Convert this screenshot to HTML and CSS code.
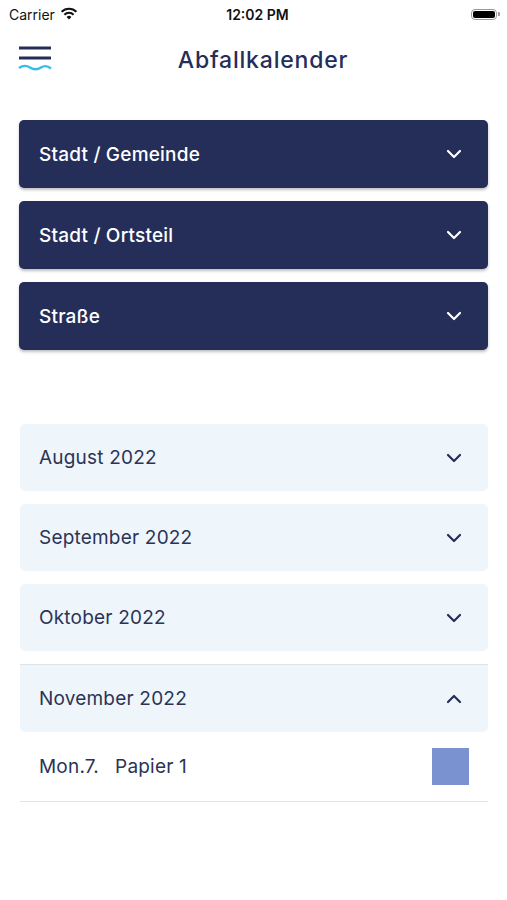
FILE: index.html
```html
<!DOCTYPE html>
<html lang="de">
<head>
    <meta charset="UTF-8">
    <meta name="viewport" content="width=device-width, initial-scale=1.0">
    <title>Abfallkalender</title>
    <link rel="stylesheet" href="styles.css">
</head>
<body>
    <div class="status-bar">
        <div class="carrier">
            Carrier
            <svg class="wifi" width="18" height="13" viewBox="0 0 18 13">
                <path d="M9 12.5 L6.6 9.9 A3.4 3.4 0 0 1 11.4 9.9 Z" fill="#111"/>
                <path d="M4.4 7.7 A6.5 6.5 0 0 1 13.6 7.7" stroke="#111" stroke-width="2.1" fill="none"/>
                <path d="M1.6 4.8 A10.5 10.5 0 0 1 16.4 4.8" stroke="#111" stroke-width="2.1" fill="none"/>
            </svg>
        </div>
        <div class="clock">12:02 PM</div>
        <div class="battery">
            <span class="battery-body"><span class="battery-fill"></span></span>
            <span class="battery-cap"></span>
        </div>
    </div>

    <header class="top-bar">
        <svg class="menu-icon" width="34" height="28" viewBox="0 0 34 28">
            <line x1="1" y1="4" x2="33" y2="4" stroke="#252d59" stroke-width="3"/>
            <line x1="1" y1="14" x2="33" y2="14" stroke="#252d59" stroke-width="3"/>
            <path d="M1 24 C5 21 8 21 12 23.5 C16 26 19 26 23 23.5 C27 21 30 22 33 24.5" stroke="#35bde8" stroke-width="2.4" fill="none"/>
        </svg>
        <h1>Abfallkalender</h1>
    </header>

    <div class="filters">
        <div class="select">
            <span>Stadt / Gemeinde</span>
            <svg class="chevron" width="16" height="10" viewBox="0 0 16 10"><path d="M2 2 L8 8 L14 2" stroke="#fff" stroke-width="2.2" fill="none" stroke-linecap="round" stroke-linejoin="round"/></svg>
        </div>
        <div class="select">
            <span>Stadt / Ortsteil</span>
            <svg class="chevron" width="16" height="10" viewBox="0 0 16 10"><path d="M2 2 L8 8 L14 2" stroke="#fff" stroke-width="2.2" fill="none" stroke-linecap="round" stroke-linejoin="round"/></svg>
        </div>
        <div class="select">
            <span>Straße</span>
            <svg class="chevron" width="16" height="10" viewBox="0 0 16 10"><path d="M2 2 L8 8 L14 2" stroke="#fff" stroke-width="2.2" fill="none" stroke-linecap="round" stroke-linejoin="round"/></svg>
        </div>
    </div>

    <div class="months">
        <div class="month">
            <span>August 2022</span>
            <svg class="chevron" width="16" height="10" viewBox="0 0 16 10"><path d="M2 2 L8 8 L14 2" stroke="#252d59" stroke-width="2.2" fill="none" stroke-linecap="round" stroke-linejoin="round"/></svg>
        </div>
        <div class="month">
            <span>September 2022</span>
            <svg class="chevron" width="16" height="10" viewBox="0 0 16 10"><path d="M2 2 L8 8 L14 2" stroke="#252d59" stroke-width="2.2" fill="none" stroke-linecap="round" stroke-linejoin="round"/></svg>
        </div>
        <div class="month">
            <span>Oktober 2022</span>
            <svg class="chevron" width="16" height="10" viewBox="0 0 16 10"><path d="M2 2 L8 8 L14 2" stroke="#252d59" stroke-width="2.2" fill="none" stroke-linecap="round" stroke-linejoin="round"/></svg>
        </div>
        <div class="month-group open">
            <div class="month">
                <span>November 2022</span>
                <svg class="chevron" width="16" height="10" viewBox="0 0 16 10"><path d="M2 8 L8 2 L14 8" stroke="#252d59" stroke-width="2.2" fill="none" stroke-linecap="round" stroke-linejoin="round"/></svg>
            </div>
            <div class="entry">
                <span class="entry-date">Mon.7.</span>
                <span class="entry-type">Papier 1</span>
                <span class="entry-color" style="background-color: #7b92d1;"></span>
            </div>
        </div>
    </div>
</body>
</html>
```

FILE: styles.css
```css
body {
    font-family: Inter, "Noto Sans", sans-serif;
    margin: 0;
    padding: 0;
    background-color: #fff;
    color: #2c3355;
}

.status-bar {
    height: 28px;
    display: grid;
    grid-template-columns: 1fr auto 1fr;
    align-items: center;
    padding: 0 7px 0 9px;
    font-size: 14px;
    color: #111;
}

.carrier {
    display: flex;
    align-items: center;
    gap: 5px;
    font-weight: 400;
}

.wifi {
    margin-top: -2px;
}

.clock {
    font-weight: 600;
    margin-left: 6px;
}

.battery {
    justify-self: end;
    display: flex;
    align-items: center;
}

.battery-body {
    width: 26px;
    height: 11px;
    border: 1px solid #9a9a9a;
    border-radius: 4px;
    padding: 1px;
    box-sizing: border-box;
    display: flex;
}

.battery-fill {
    flex: 1;
    background: #000;
    border-radius: 2px;
}

.battery-cap {
    width: 2px;
    height: 4px;
    background: #9a9a9a;
    border-radius: 0 1px 1px 0;
    margin-left: 1px;
}

.top-bar {
    height: 64px;
    position: relative;
    display: flex;
    align-items: center;
    justify-content: center;
}

.menu-icon {
    position: absolute;
    left: 18px;
    top: 16px;
}

h1 {
    margin: 0 0 0 19px;
    font-size: 23px;
    font-weight: 500;
    color: #252d59;
    letter-spacing: 0.8px;
}

.filters {
    padding: 28px 19px 0;
    display: flex;
    flex-direction: column;
    gap: 13px;
}

.select {
    height: 68px;
    background-color: #252d59;
    border-radius: 5px;
    box-shadow: 0 2px 3px rgba(0, 0, 0, 0.25);
    display: flex;
    align-items: center;
    justify-content: space-between;
    padding: 0 26px 0 20px;
    color: #fff;
    font-size: 19px;
    font-weight: 500;
    letter-spacing: 0.2px;
}

.months {
    margin: 74px 19px 0 20px;
    display: flex;
    flex-direction: column;
    gap: 13px;
}

.month {
    height: 67px;
    background-color: #eef6fc;
    border-radius: 5px;
    display: flex;
    align-items: center;
    justify-content: space-between;
    padding: 0 26px 0 19px;
    font-size: 19px;
    letter-spacing: 0.2px;
}

.month-group.open {
    border-top: 1px solid #dfe3e8;
}

.month-group.open .month {
    border-radius: 0 0 5px 5px;
}

.entry {
    height: 69px;
    display: flex;
    align-items: center;
    padding: 0 19px;
    border-bottom: 1px solid #e3e5e8;
    font-size: 19px;
    letter-spacing: 0.2px;
}

.entry-type {
    margin-left: 16px;
    flex: 1;
}

.entry-color {
    width: 37px;
    height: 37px;
}
```
